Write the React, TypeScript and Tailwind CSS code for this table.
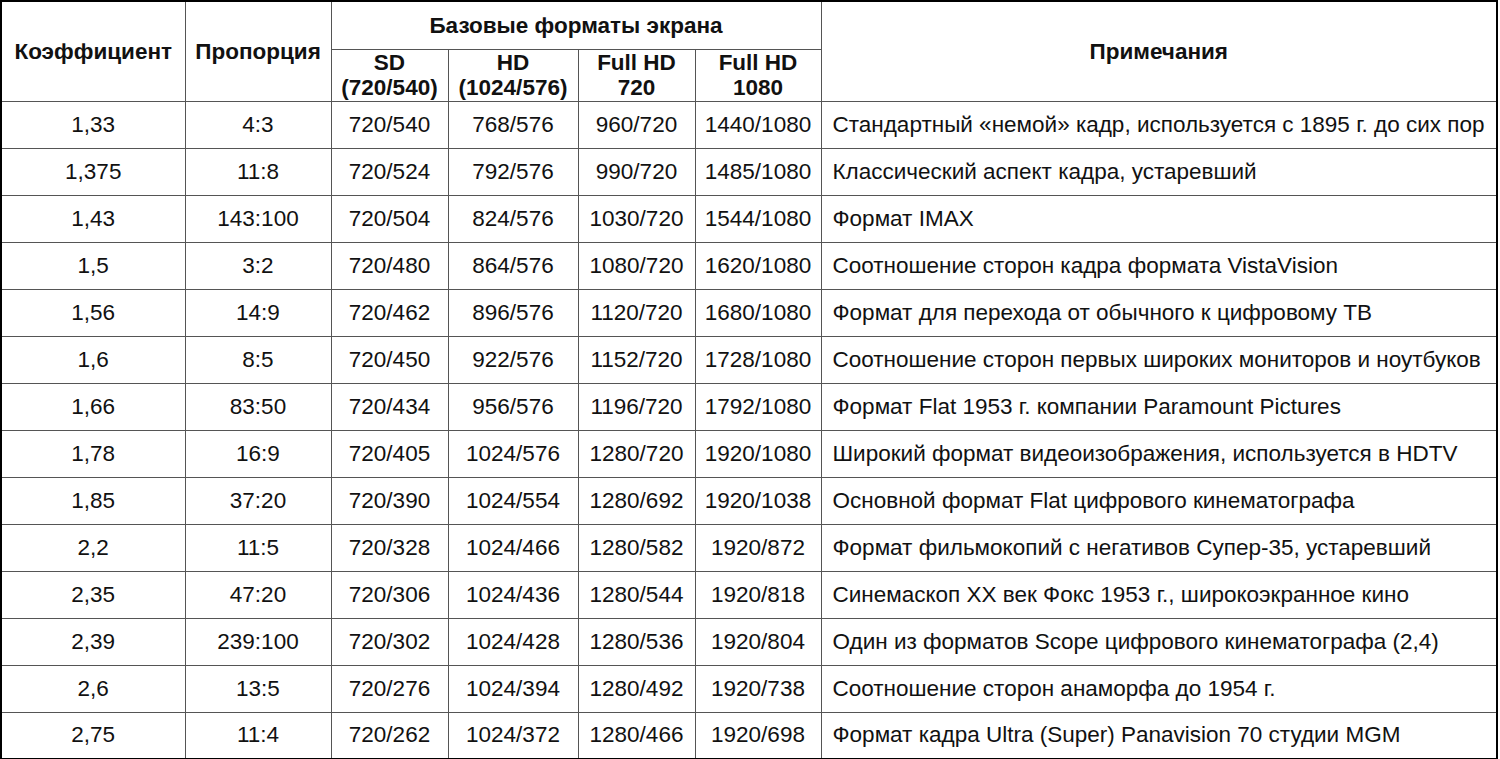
const rows: [string, string, string, string, string, string, string][] = [
  ['1,33', '4:3', '720/540', '768/576', '960/720', '1440/1080', 'Стандартный «немой» кадр, используется с 1895 г. до сих пор'],
  ['1,375', '11:8', '720/524', '792/576', '990/720', '1485/1080', 'Классический аспект кадра, устаревший'],
  ['1,43', '143:100', '720/504', '824/576', '1030/720', '1544/1080', 'Формат IMAX'],
  ['1,5', '3:2', '720/480', '864/576', '1080/720', '1620/1080', 'Соотношение сторон кадра формата VistaVision'],
  ['1,56', '14:9', '720/462', '896/576', '1120/720', '1680/1080', 'Формат для перехода от обычного к цифровому ТВ'],
  ['1,6', '8:5', '720/450', '922/576', '1152/720', '1728/1080', 'Соотношение сторон первых широких мониторов и ноутбуков'],
  ['1,66', '83:50', '720/434', '956/576', '1196/720', '1792/1080', 'Формат Flat 1953 г. компании Paramount Pictures'],
  ['1,78', '16:9', '720/405', '1024/576', '1280/720', '1920/1080', 'Широкий формат видеоизображения, используется в HDTV'],
  ['1,85', '37:20', '720/390', '1024/554', '1280/692', '1920/1038', 'Основной формат Flat цифрового кинематографа'],
  ['2,2', '11:5', '720/328', '1024/466', '1280/582', '1920/872', 'Формат фильмокопий с негативов Супер-35, устаревший'],
  ['2,35', '47:20', '720/306', '1024/436', '1280/544', '1920/818', 'Синемаскоп XX век Фокс 1953 г., широкоэкранное кино'],
  ['2,39', '239:100', '720/302', '1024/428', '1280/536', '1920/804', 'Один из форматов Scope цифрового кинематографа (2,4)'],
  ['2,6', '13:5', '720/276', '1024/394', '1280/492', '1920/738', 'Соотношение сторон анаморфа до 1954 г.'],
  ['2,75', '11:4', '720/262', '1024/372', '1280/466', '1920/698', 'Формат кадра Ultra (Super) Panavision 70 студии MGM'],
];

const th = 'border border-[#555] p-0 font-bold text-[22.5px] leading-[25px] text-center align-middle text-[#111] whitespace-nowrap';
const td = 'border border-[#555] h-[47px] p-0 text-[22.5px] text-center align-middle text-[#111]';

export default function App() {
  return (
    <div className="w-[1500px] h-[759px] bg-white overflow-hidden" style={{ fontFamily: '"Liberation Sans", Arial, sans-serif' }}>
      <table className="table-fixed border-collapse w-[1498px] border-2 border-black">
        <colgroup>
          <col className="w-[184px]" />
          <col className="w-[146px]" />
          <col className="w-[117px]" />
          <col className="w-[130px]" />
          <col className="w-[117px]" />
          <col className="w-[126px]" />
          <col />
        </colgroup>
        <thead>
          <tr className="h-[48px]">
            <th rowSpan={2} className={th}>Коэффициент</th>
            <th rowSpan={2} className={th}>Пропорция</th>
            <th colSpan={4} className={th}>Базовые форматы экрана</th>
            <th rowSpan={2} className={th}>Примечания</th>
          </tr>
          <tr className="h-[52px]">
            <th className={th}>SD<br />(720/540)</th>
            <th className={th}>HD<br />(1024/576)</th>
            <th className={th}>Full HD<br />720</th>
            <th className={th}>Full HD<br />1080</th>
          </tr>
        </thead>
        <tbody>
          {rows.map((r) => (
            <tr key={r[0]}>
              {r.slice(0, 6).map((c, i) => (
                <td key={i} className={td}>{c}</td>
              ))}
              <td className={`${td} text-left pl-[11px] whitespace-nowrap`}>{r[6]}</td>
            </tr>
          ))}
        </tbody>
      </table>
    </div>
  );
}
